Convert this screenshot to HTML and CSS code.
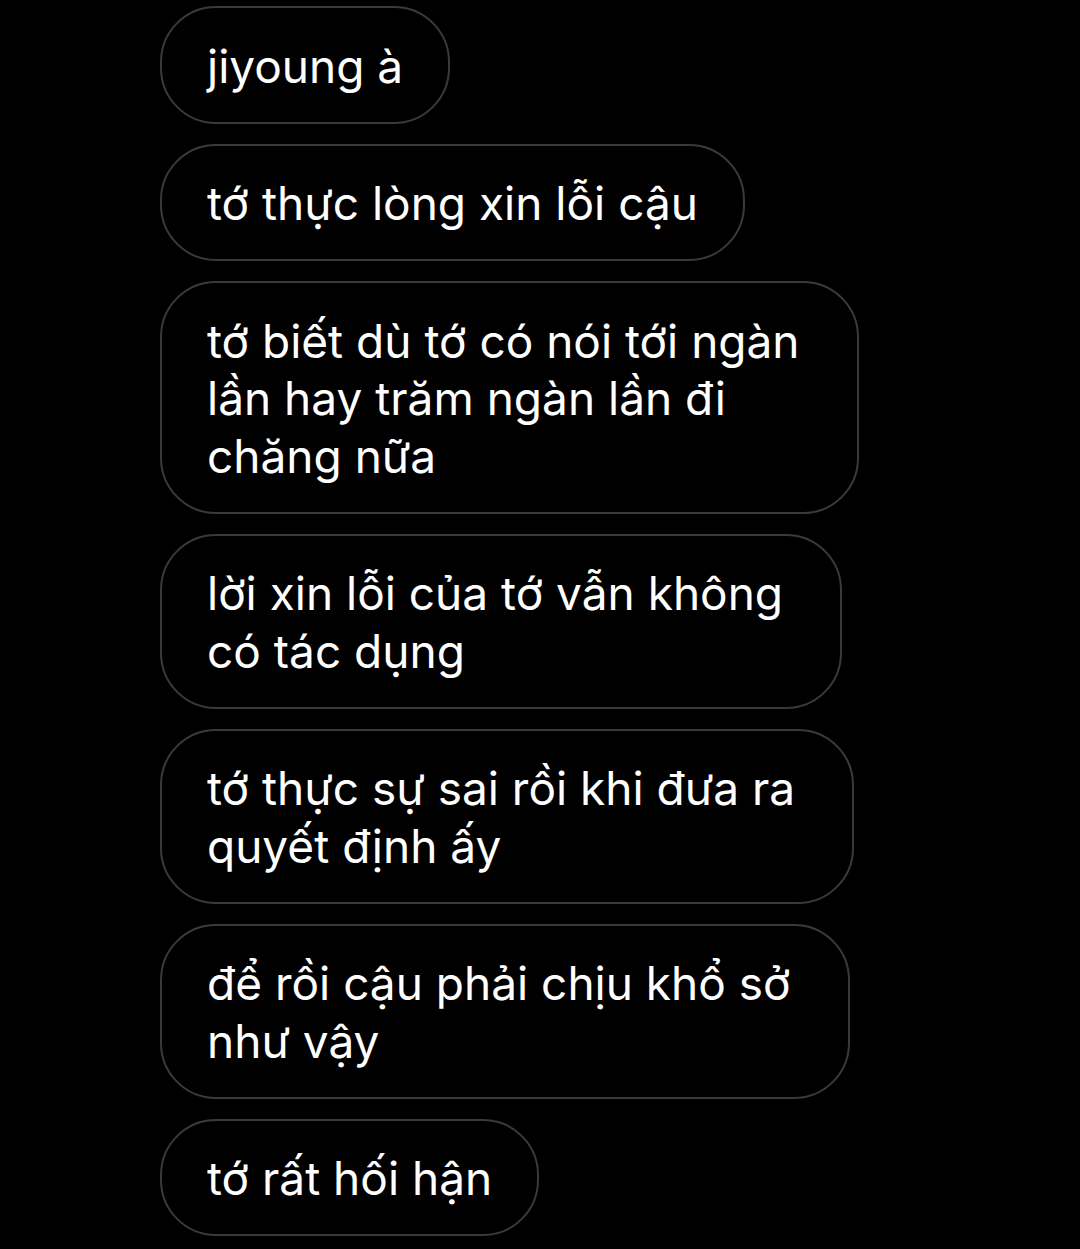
FILE: index.html
```html
<!DOCTYPE html>
<html lang="vi">
<head>
    <meta charset="UTF-8">
    <meta name="viewport" content="width=device-width, initial-scale=1.0">
    <title>Tin nhắn</title>
    <link rel="stylesheet" href="styles.css">
</head>
<body>
    <div class="thread">
        <div class="bubble">jiyoung à</div>
        <div class="bubble">tớ thực lòng xin lỗi cậu</div>
        <div class="bubble wrapped">tớ biết dù tớ có nói tới ngàn<br>lần hay trăm ngàn lần đi<br>chăng nữa</div>
        <div class="bubble wrapped">lời xin lỗi của tớ vẫn không<br>có tác dụng</div>
        <div class="bubble wrapped">tớ thực sự sai rồi khi đưa ra<br>quyết định ấy</div>
        <div class="bubble wrapped">để rồi cậu phải chịu khổ sở<br>như vậy</div>
        <div class="bubble">tớ rất hối hận</div>
    </div>
</body>
</html>
```

FILE: styles.css
```css
body {
    background-color: #000;
    color: #fff;
    font-family: 'Inter', 'Noto Sans', sans-serif;
    margin: 0;
    padding: 6px 0 0 160px;
}
.thread {
    display: flex;
    flex-direction: column;
    align-items: flex-start;
    gap: 20px;
}
.bubble {
    border: 2px solid #3a3a3a;
    border-radius: 56px;
    padding: 29.5px 45px 26.5px 45px;
    font-size: 46px;
    line-height: 57.5px;
    white-space: nowrap;
}
.bubble.wrapped {
    padding-right: 57px;
}
```
